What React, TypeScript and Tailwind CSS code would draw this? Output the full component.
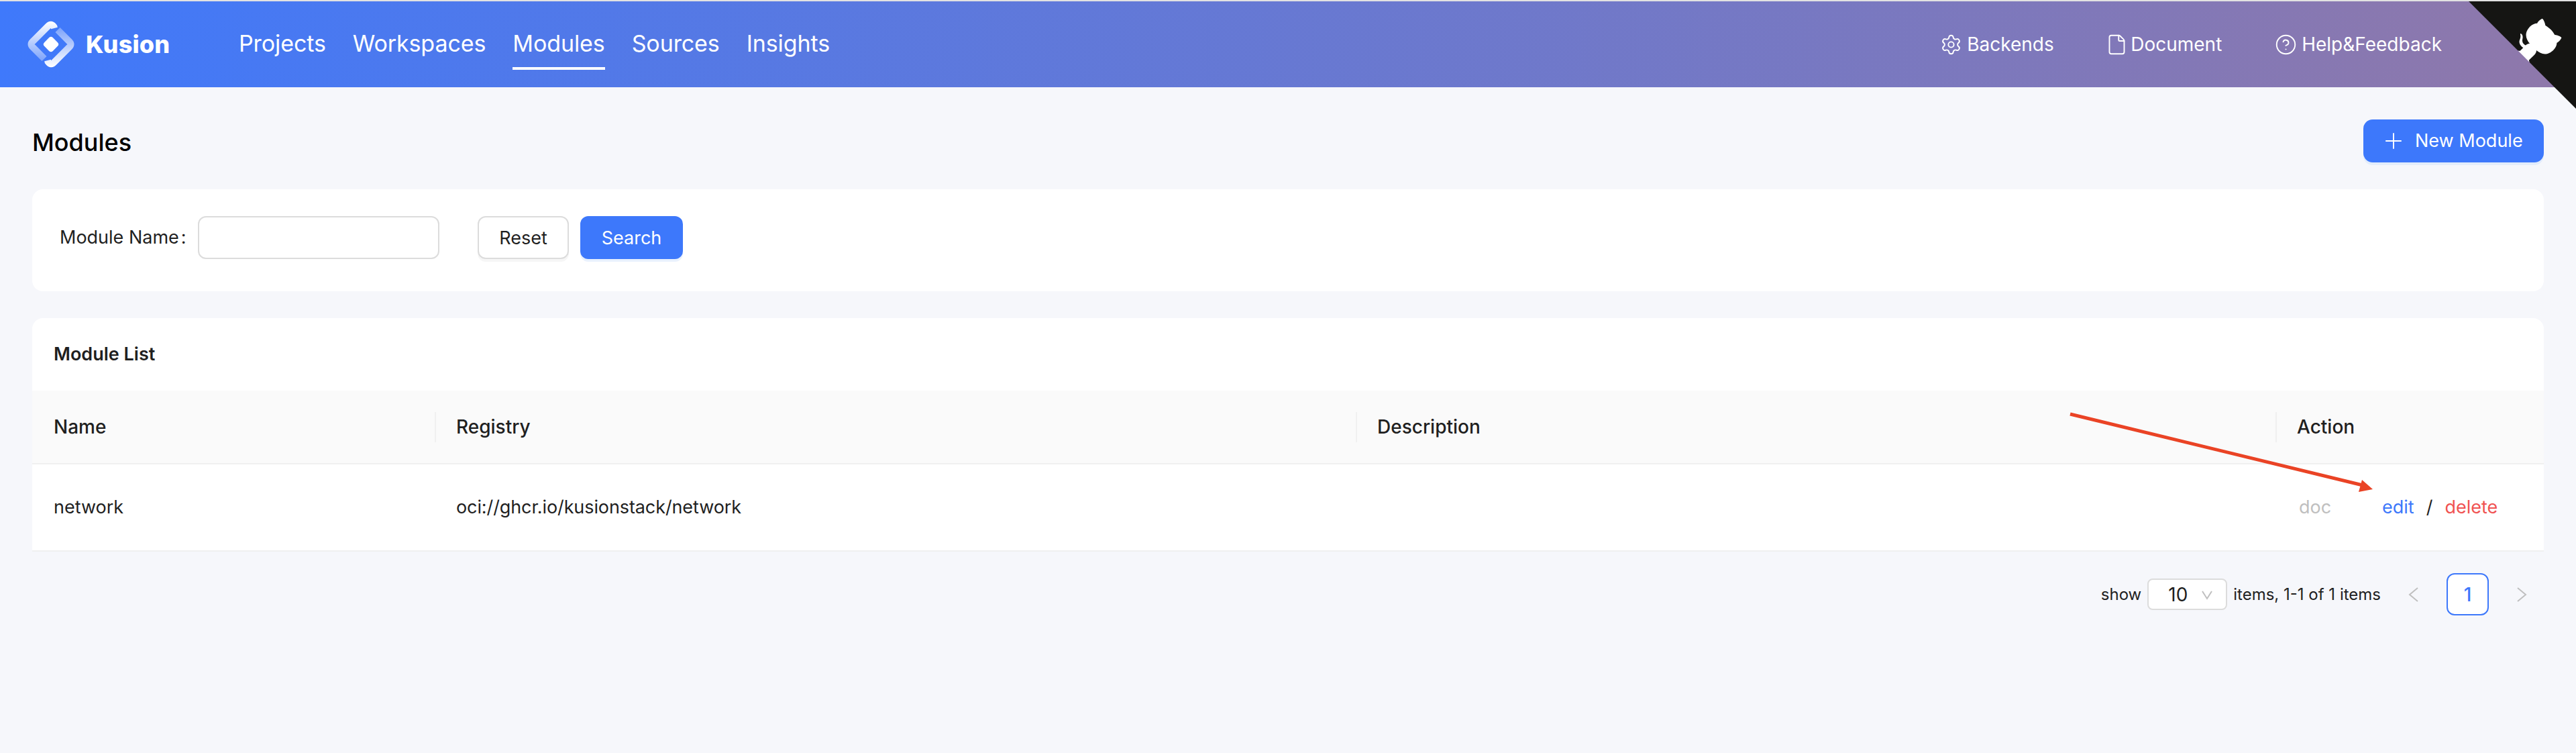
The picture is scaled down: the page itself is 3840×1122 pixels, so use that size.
import { CircleHelp, File, Plus, Settings } from 'lucide-react';

const navItems = ['Projects', 'Workspaces', 'Modules', 'Sources', 'Insights'];

const headerLinks = [
  { label: 'Backends', Icon: Settings, gap: 'gap-[7px]', box: 'ml-[-2px]' },
  { label: 'Document', Icon: File, gap: 'gap-[4px]', box: 'ml-[-5px]' },
  { label: 'Help&Feedback', Icon: CircleHelp, gap: 'gap-[7px]', box: 'ml-[-3px]' },
];

const columns = ['Name', 'Registry', 'Description', 'Action'];

function Logo() {
  return (
    <svg width="72" height="72" viewBox="0 0 72 72" fill="none">
      <defs>
        <linearGradient id="ringA" gradientUnits="userSpaceOnUse" x1="30" y1="2" x2="30" y2="62">
          <stop offset="0" stopColor="#ffffff" />
          <stop offset="1" stopColor="#ffffff" stopOpacity="0.3" />
        </linearGradient>
        <linearGradient id="ringB" gradientUnits="userSpaceOnUse" x1="42" y1="70" x2="42" y2="10">
          <stop offset="0" stopColor="#ffffff" />
          <stop offset="1" stopColor="#ffffff" stopOpacity="0.3" />
        </linearGradient>
      </defs>
      <path d="M41 12 L40.500 10 Q36 4 31.500 9 L9 31.500 Q4 36 9 40.500 L26 57.500" stroke="url(#ringA)" strokeWidth="10" />
      <path d="M31 60 L31.500 62 Q36 68 40.500 63 L63 40.500 Q68 36 63 31.500 L46 14.500" stroke="url(#ringB)" strokeWidth="10" />
      <rect x="27" y="27" width="18" height="18" rx="4" fill="#ffffff" transform="rotate(45 36 36)" />
    </svg>
  );
}

function GithubCorner() {
  return (
    <svg className="absolute top-[2px] right-0 text-white" width="160" height="160" viewBox="0 0 250 250" fill="#151513">
      <path d="M0,0 L115,115 L130,115 L142,142 L250,250 L250,0 Z" />
      <path
        d="M128.3,109.0 C113.8,99.7 119.0,89.6 119.0,89.6 C122.0,82.7 120.5,78.6 120.5,78.6 C119.2,72.0 123.4,76.3 123.4,76.3 C127.3,80.9 125.5,87.3 125.5,87.3 C122.9,97.6 130.6,101.9 134.4,103.2"
        fill="currentColor"
      />
      <path
        d="M115.0,115.0 C114.9,115.1 118.7,116.5 119.8,115.4 L133.7,101.6 C136.9,99.2 139.9,98.4 142.2,98.6 C133.8,88.0 127.5,74.4 143.8,58.0 C148.5,53.4 154.0,51.2 159.7,51.0 C160.3,49.4 163.2,43.6 171.4,40.1 C171.4,40.1 176.1,42.5 178.8,56.2 C183.1,58.6 187.2,61.8 190.9,65.4 C194.5,69.0 197.7,73.2 200.1,77.6 C213.8,80.2 216.3,84.9 216.3,84.9 C212.7,93.1 206.9,96.0 205.4,96.6 C205.1,102.4 203.0,107.8 198.3,112.5 C181.9,128.9 168.3,122.5 157.7,114.1 C157.9,116.9 156.7,120.9 152.7,124.9 L141.0,136.5 C139.8,137.7 141.6,141.9 141.8,141.8 Z"
        fill="currentColor"
      />
    </svg>
  );
}

function Arrow() {
  return (
    <svg className="absolute left-[3080px] top-[610px]" width="470" height="130" viewBox="0 0 470 130" fill="none">
      <line x1="6" y1="7" x2="442" y2="113" stroke="#ea4325" strokeWidth="5" />
      <polygon points="441,105 457,119 436,123" fill="#ea4325" />
    </svg>
  );
}

function Chevron({ points, className }: { points: string; className: string }) {
  return (
    <svg className={className} width="16" height="22" viewBox="0 0 16 22" fill="none" stroke="#bfbfbf" strokeWidth="2">
      <polyline points={points} />
    </svg>
  );
}

export default function App() {
  return (
    <div className="relative min-h-[1122px] overflow-hidden bg-[#f6f7fb] pt-[2px] font-['Inter',sans-serif] text-[#1f1f1f]">
      <div className="absolute top-0 left-0 h-[2px] w-full bg-[#e2e2e2]" />

      {/* Header */}
      <header className="flex h-[128px] items-center bg-[linear-gradient(to_right,#3f79fb,#8f78aa)] pl-[40px] text-white">
        <Logo />
        <span className="ml-[16px] w-[228px] text-[36px] font-extrabold leading-none tracking-[0.2px]">Kusion</span>
        <nav className="flex h-full items-start gap-[40px]">
          {navItems.map((item) => (
            <div
              key={item}
              className={`h-[102px] border-b-[4px] pt-[42px] text-[34px] leading-[41px] tracking-[-0.1px] ${
                item === 'Modules' ? 'border-white' : 'border-transparent'
              }`}
            >
              {item}
            </div>
          ))}
        </nav>
        <div className="ml-auto mr-[200px] grid grid-cols-[250px_250px_auto] items-center text-[28px]">
          {headerLinks.map(({ label, Icon, gap, box }) => (
            <div key={label} className={`flex items-center ${gap}`}>
              <Icon size={33} strokeWidth={1.4} className={box} />
              {label}
            </div>
          ))}
        </div>
      </header>
      <GithubCorner />

      <main className="px-[48px]">
        {/* Title */}
        <div className="flex h-[152px] items-start justify-between pt-[48px]">
          <h1 className="mt-[2px] text-[36px] font-medium leading-[64px] text-black">Modules</h1>
          <button className="flex h-[64px] w-[269px] items-center gap-[13px] rounded-[14px] bg-[#3d78fb] pl-[26px] text-[27px] text-white shadow-[0_4px_0_#e3edfb]">
            <Plus size={38} strokeWidth={1.2} />
            New Module
          </button>
        </div>

        {/* Search */}
        <section className="flex h-[152px] items-start rounded-[16px] bg-white pt-[40px] pl-[41px] text-[27px]">
          <label className="flex h-[64px] w-[206px] items-center">
            Module Name<span className="ml-[3px]">:</span>
          </label>
          <input className="h-[64px] w-[360px] rounded-[12px] border-[2px] border-[#dcdcdc] bg-white" />
          <button className="ml-[57px] h-[64px] w-[136px] rounded-[12px] border-[2px] border-[#dcdcdc] bg-white pt-[2px] shadow-[0_4px_0_#f6f6f6]">
            Reset
          </button>
          <button className="ml-[17px] h-[64px] w-[153px] rounded-[12px] bg-[#3d78fb] pt-[2px] text-white shadow-[0_4px_0_#e9f1fd]">
            Search
          </button>
        </section>

        {/* Table */}
        <section className="mt-[40px] overflow-hidden rounded-t-[16px] bg-white text-[27px]">
          <div className="flex h-[108px] items-center pl-[32px] font-semibold">Module List</div>
          <div className="grid h-[110px] grid-cols-[600px_1373px_1371px_1fr] border-b-[2px] border-[#f0f0f0] bg-[#fafafa] text-[28px] font-medium">
            {columns.map((col, i) => (
              <div key={col} className="flex items-center">
                <div className={`h-[45px] w-[2px] ${i === 0 ? 'bg-transparent' : 'bg-[#f0f0f0]'}`} />
                <span className="ml-[30px]">{col}</span>
              </div>
            ))}
          </div>
          <div className="grid h-[130px] grid-cols-[600px_1373px_1371px_1fr] items-center border-b-[2px] border-[#f0f0f0]">
            <div className="pl-[32px]">network</div>
            <div className="pl-[32px] tracking-[-0.1px]">oci://ghcr.io/kusionstack/network</div>
            <div />
            <div className="flex items-center pl-[35px]">
              <span className="w-[124px] text-[#bfbfbf]">doc</span>
              <span className="text-[#3d78fb]">edit</span>
              <span className="mx-[18px]">/</span>
              <span className="text-[#f05252]">delete</span>
            </div>
          </div>
        </section>

        {/* Pagination */}
        <div className="flex items-center justify-end pt-[32px] pr-[25px] text-[24px]">
          <span>show</span>
          <div className="mx-[9px] flex h-[47px] w-[119px] items-center justify-between rounded-[8px] border-[2px] border-[#dcdcdc] bg-white pr-[20px] pl-[29px] text-[28px]">
            10
            <Chevron points="1,6 8,17 15,6" className="" />
          </div>
          <span>items, 1-1 of 1 items</span>
          <Chevron points="14,1 2,11 14,21" className="ml-[41px]" />
          <div className="mx-[41px] flex h-[63px] w-[63px] items-center justify-center rounded-[12px] border-[2px] border-[#3d78fb] bg-white text-[28px] font-medium text-[#3d78fb]">
            1
          </div>
          <Chevron points="2,1 14,11 2,21" className="" />
        </div>
      </main>
      <Arrow />
    </div>
  );
}
